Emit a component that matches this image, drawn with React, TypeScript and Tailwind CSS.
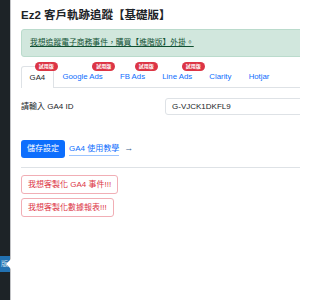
const tabs = [
  { name: "GA4", trial: true, active: true },
  { name: "Google Ads", trial: true },
  { name: "FB Ads", trial: true },
  { name: "Line Ads", trial: true },
  { name: "Clarity" },
  { name: "Hotjar" },
]

function Sidebar() {
  return (
    <div className="relative w-[11px] shrink-0 bg-[#1d2327] border-r border-[#c3c4c7]">
      <div className="absolute left-0 top-[256px] h-[16px] w-[10px] bg-[#2271b1] overflow-hidden">
        <span className="block pl-[1px] text-[7px] leading-[16px] text-[#cfe3f3] whitespace-nowrap">版</span>
      </div>
      <div className="absolute left-[6px] top-[259px] h-0 w-0 border-y-[5px] border-y-transparent border-r-[5px] border-r-white" />
    </div>
  )
}

export default function App() {
  return (
    <div
      className="flex w-[300px] h-[300px] overflow-hidden bg-white text-[#212529]"
      style={{ fontFamily: '"Liberation Sans", "Noto Sans CJK TC", sans-serif' }}
    >
      <Sidebar />

      <div className="flex-1 min-w-0 pl-[10px] pt-[6px]">
        <h1 className="text-[11.5px] leading-[18px] font-semibold text-[#1d2327] whitespace-nowrap">
          Ez2 客戶軌跡追蹤【基礎版】
        </h1>

        <div className="mt-[5px] w-[300px] h-[28px] flex items-center pl-[8px] bg-[#d1e7dd] border border-[#badbcc] rounded-[3px]">
          <a href="#" className="text-[7.8px] text-[#0f5132] underline whitespace-nowrap">
            我想追蹤電子商務事件，購買【進階版】外掛。
          </a>
        </div>

        {/* tabs */}
        <div className="mt-[9px] flex w-[300px] border-b border-[#dee2e6]">
          {tabs.map((t) => (
            <div
              key={t.name}
              className={`relative px-[7.6px] flex items-center text-[7.8px] whitespace-nowrap ${
                t.active
                  ? "text-[#212529] border border-b-0 border-[#dee2e6] rounded-t-[3px] bg-white -mb-px h-[22px]"
                  : "text-[#0d6efd] border border-transparent h-[21px]"
              }`}
            >
              {t.name}
              {t.trial && (
                <span className="absolute -top-[5px] -right-[5px] h-[9px] px-[4px] rounded-full bg-[#dc3545] text-white text-[5px] leading-[9px] font-bold">
                  試用版
                </span>
              )}
            </div>
          ))}
        </div>

        <div className="mt-[10px] flex items-center h-[17px]">
          <span className="w-[144px] shrink-0 text-[8px] text-[#212529]">請輸入 GA4 ID</span>
          <div className="w-[200px] shrink-0 h-[17px] flex items-center pl-[6px] border border-[#dee2e6] rounded-[3px] text-[8px] text-[#212529]">
            G-VJCK1DKFL9
          </div>
        </div>

        <div className="mt-[25px] flex items-center">
          <button className="h-[18px] px-[6px] rounded-[3px] bg-[#0d6efd] text-white text-[8px]">
            儲存設定
          </button>
          <a href="#" className="ml-[4px] text-[8px] text-[#0d6efd] border-b border-[#9ec5fe] leading-[12px]">
            GA4 使用教學
          </a>
          <span className="ml-[5px] text-[9px] font-bold text-[#3b5f8f]">→</span>
        </div>

        <div className="mt-[9px] w-[300px] border-t border-[#dee2e6]" />

        <div className="mt-[7px] flex flex-col items-start gap-[4px]">
          <button className="h-[19px] px-[6px] rounded-[3px] border border-[#f1aeb5] text-[#dc3545] text-[8px]">
            我想客製化 GA4 事件!!!
          </button>
          <button className="h-[19px] px-[6px] rounded-[3px] border border-[#f1aeb5] text-[#dc3545] text-[8px]">
            我想客製化數據報表!!!
          </button>
        </div>
      </div>
    </div>
  )
}
